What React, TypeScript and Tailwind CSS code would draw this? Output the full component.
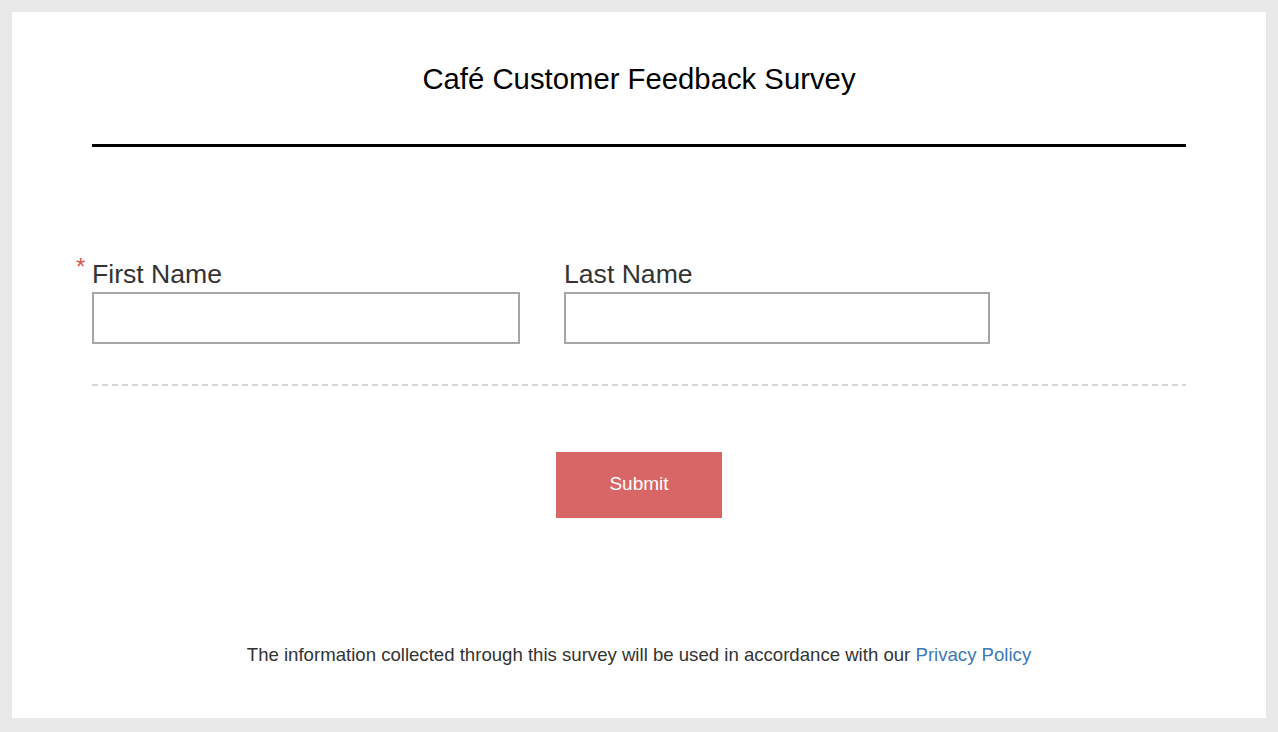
export default function App() {
  return (
    <div className="min-h-screen bg-[#e8e8e8] p-3 font-['Liberation_Sans',Arial,sans-serif]">
      <div className="h-[706px] bg-white px-20 pt-[50px]">
        <h1 className="text-center text-[29.3px] leading-[34px] text-black">Café Customer Feedback Survey</h1>
        <div className="mt-[48px] h-[3px] bg-black" />

        <div className="mt-[112px] flex gap-[44px]">
          <div className="relative w-[428px]">
            <span className="absolute -left-[16px] -top-[7px] text-[24px] leading-[30px] text-[#d9534f]">*</span>
            <label className="block text-[26.6px] leading-[30px] text-[#333]">First Name</label>
            <input className="mt-[3px] block h-[52px] w-full border-2 border-[#a6a6a6] bg-white outline-none" />
          </div>
          <div className="w-[426px]">
            <label className="block text-[26.6px] leading-[30px] text-[#333]">Last Name</label>
            <input className="mt-[3px] block h-[52px] w-full border-2 border-[#a6a6a6] bg-white outline-none" />
          </div>
        </div>

        <div className="mt-[40px] h-[2px] bg-[repeating-linear-gradient(to_right,#d6d6d6_0,#d6d6d6_6px,transparent_6px,transparent_10px)]" />

        <div className="mt-[66px] flex justify-center">
          <button className="h-[66px] w-[166px] bg-[#d96666] pb-[2px] text-[19px] text-white">Submit</button>
        </div>

        <p className="mt-[126px] text-center text-[18.6px] leading-[22px] text-[#333]">
          The information collected through this survey will be used in accordance with our{' '}
          <a className="text-[#3d78b8]">Privacy Policy</a>
        </p>
      </div>
    </div>
  );
}
